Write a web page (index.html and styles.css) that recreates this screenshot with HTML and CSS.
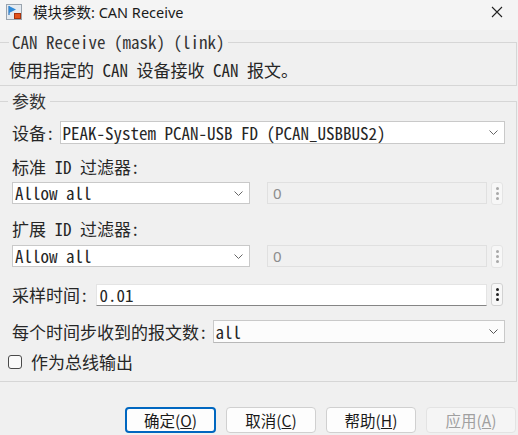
FILE: index.html
```html
<!DOCTYPE html>
<html lang="zh-CN">
<head>
    <meta charset="UTF-8">
    <meta name="viewport" content="width=device-width, initial-scale=1.0">
    <title>模块参数: CAN Receive</title>
    <link rel="stylesheet" href="styles.css">
</head>
<body>
<div class="dialog">

    <div class="titlebar">
        <svg class="app-icon" width="16" height="16" viewBox="0 0 16 16">
            <rect x="0.5" y="0.5" width="15" height="15" fill="#e4eaf0" stroke="#9aa4ae"/>
            <path d="M3 2 L3 11" stroke="#2a6fb8" stroke-width="1.2"/>
            <path d="M3 2 L10 5.5 L3 9 Z" fill="#2f8ad8"/>
            <rect x="8.5" y="9.5" width="6" height="5" fill="#e2531c" stroke="#a8330c"/>
        </svg>
        <span class="title">模块参数: CAN Receive</span>
        <svg class="close" width="12" height="12" viewBox="0 0 12 12">
            <path d="M1 1 L11 11 M11 1 L1 11" stroke="#222" stroke-width="1.1"/>
        </svg>
    </div>

    <fieldset class="group desc">
        <legend>CAN Receive (mask) (link)</legend>
        <p>使用指定的 CAN 设备接收 CAN 报文。</p>
    </fieldset>

    <fieldset class="group params">
        <legend>参数</legend>

        <div class="row device">
            <span class="label">设备:</span>
            <div class="select">
                <span>PEAK-System PCAN-USB FD (PCAN_USBBUS2)</span>
                <svg class="chev" width="9" height="5" viewBox="0 0 9 5"><path d="M0.5 0.5 L4.5 4.5 L8.5 0.5" fill="none" stroke="#666"/></svg>
            </div>
        </div>

        <div class="field-label first">标准 ID 过滤器:</div>
        <div class="filter-row">
            <div class="select">
                <span>Allow all</span>
                <svg class="chev" width="9" height="5" viewBox="0 0 9 5"><path d="M0.5 0.5 L4.5 4.5 L8.5 0.5" fill="none" stroke="#666"/></svg>
            </div>
            <div class="input disabled">0</div>
            <div class="kebab disabled"><i></i><i></i><i></i></div>
        </div>

        <div class="field-label second">扩展 ID 过滤器:</div>
        <div class="filter-row second">
            <div class="select">
                <span>Allow all</span>
                <svg class="chev" width="9" height="5" viewBox="0 0 9 5"><path d="M0.5 0.5 L4.5 4.5 L8.5 0.5" fill="none" stroke="#666"/></svg>
            </div>
            <div class="input disabled">0</div>
            <div class="kebab disabled"><i></i><i></i><i></i></div>
        </div>

        <div class="row sample">
            <span class="label">采样时间:</span>
            <div class="input edit">0.01</div>
            <div class="kebab"><i></i><i></i><i></i></div>
        </div>

        <div class="row count">
            <span class="label">每个时间步收到的报文数:</span>
            <div class="select light">
                <span>all</span>
                <svg class="chev" width="9" height="5" viewBox="0 0 9 5"><path d="M0.5 0.5 L4.5 4.5 L8.5 0.5" fill="none" stroke="#555"/></svg>
            </div>
        </div>

        <div class="check-row">
            <span class="checkbox"></span>
            <span>作为总线输出</span>
        </div>
    </fieldset>

    <div class="buttons">
        <button class="btn primary">确定(<u>O</u>)</button>
        <button class="btn">取消(<u>C</u>)</button>
        <button class="btn">帮助(<u>H</u>)</button>
        <button class="btn" disabled>应用(<u>A</u>)</button>
    </div>

</div>
</body>
</html>
```

FILE: styles.css
```css
body {
    margin: 0;
    background-color: #f0f0f0;
    font-family: "Noto Sans Mono CJK SC", "Liberation Mono", "Noto Sans CJK SC", monospace;
    font-size: 17px;
    line-height: 20px;
    color: #262626;
}

.dialog {
    width: 518px;
    height: 435px;
    overflow: hidden;
}

.titlebar {
    height: 30px;
    box-sizing: border-box;
    padding: 0 0 6px 6px;
    background-color: #f4f4f4;
    display: flex;
    align-items: center;
}

.app-icon {
    flex: none;
}

.title {
    margin-left: 11px;
    font-family: "Noto Sans", "Noto Sans CJK SC", sans-serif;
    font-size: 14.5px;
    color: #1a1a1a;
}

.close {
    margin-left: auto;
    margin-right: 15px;
}

.group {
    margin: 0 1px 0 0;
    border: 1px solid #d6d6d6;
    border-left: none;
    min-width: 0;
}

.group legend {
    line-height: 20px;
    color: #333;
}

.desc {
    margin-top: 2px;
    padding: 8px 10px 5px 9px;
}

.desc legend {
    padding: 0 3px;
}

.desc p {
    margin: 0;
}

.params {
    margin-top: 5px;
    padding: 10px 11px 9px 12px;
}

.params legend {
    padding: 0 4px;
    margin-left: -4px;
}

.row {
    display: flex;
    align-items: center;
    gap: 5px;
}

.label {
    flex: none;
}

.select {
    flex: 1;
    height: 23px;
    box-sizing: border-box;
    border: 1px solid #c9c9c9;
    background-color: #fff;
    display: flex;
    align-items: center;
    padding: 0 6px 0 2px;
}

.select span {
    flex: 1;
    white-space: nowrap;
}

.select.light {
    background-color: #fcfcfc;
    border-bottom-color: #b8b8b8;
}

.chev {
    flex: none;
}

.field-label.first {
    margin-top: 13px;
}

.field-label.second {
    margin-top: 15px;
}

.filter-row {
    margin-top: 5px;
    padding-right: 2px;
    display: grid;
    grid-template-columns: 238px 1fr 12px;
    gap: 4px;
    height: 22px;
}

.filter-row .select {
    height: 22px;
}

.filter-row .input {
    margin-left: 13px;
}

.filter-row.second {
    margin-top: 6px;
}

.input {
    height: 22px;
    box-sizing: border-box;
    padding-left: 3px;
    display: flex;
    align-items: center;
}

.input.disabled {
    border: 1px solid #e0e0e0;
    background-color: #f0f0f0;
    color: #8c8c8c;
    font-family: "Noto Sans", sans-serif;
    font-size: 15px;
    padding-left: 5px;
}

.input.edit {
    flex: 1;
    background-color: #fff;
    border: 1px solid #e4e4e4;
    border-bottom-color: #858585;
}

.kebab {
    width: 12px;
    height: 23px;
    box-sizing: border-box;
    border: 1px solid #d2d2d2;
    border-radius: 3px;
    background-color: #f7f7f7;
    display: flex;
    flex-direction: column;
    align-items: center;
    justify-content: center;
    gap: 2px;
}

.kebab i {
    width: 3px;
    height: 3px;
    border-radius: 50%;
    background-color: #222;
}

.kebab.disabled {
    border-color: #e4e4e4;
}

.kebab.disabled i {
    background-color: #a8a8a8;
}

.sample {
    margin-top: 16px;
    padding-right: 2px;
    gap: 0;
}

.sample .label {
    margin-right: 7px;
}

.sample .kebab {
    margin-left: 4px;
}

.count {
    margin-top: 14px;
    gap: 5px;
}

.check-row {
    margin-top: 9px;
    margin-left: -4px;
    height: 20px;
    display: flex;
    align-items: center;
    gap: 9px;
}

.checkbox {
    width: 14px;
    height: 14px;
    box-sizing: border-box;
    border: 1px solid #4a4a4a;
    border-radius: 3px;
    background-color: #fafafa;
}

.buttons {
    margin-top: 25px;
    padding-right: 2px;
    display: flex;
    justify-content: flex-end;
    gap: 10px;
}

.btn {
    width: 90px;
    height: 26px;
    padding: 0;
    border: 1px solid #d0d0d0;
    border-radius: 4px;
    background-color: #fdfdfd;
    font-family: "Noto Sans CJK SC", sans-serif;
    font-size: 15.5px;
    color: #1a1a1a;
}

.btn.primary {
    width: 91px;
    border: 2px solid #0067c0;
}

.btn:disabled {
    background-color: #f5f5f5;
    border-color: #e3e3e3;
    color: #a0a0a0;
}
```
